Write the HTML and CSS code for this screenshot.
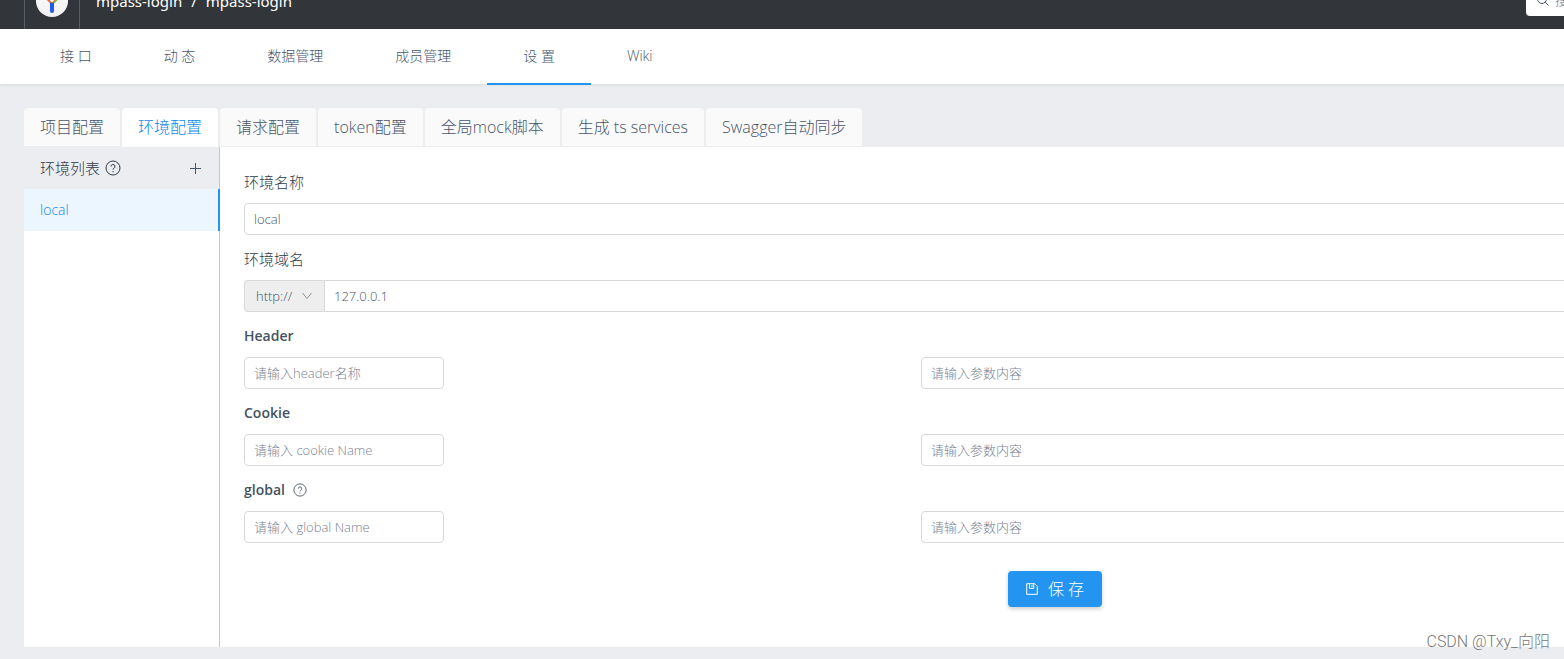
FILE: index.html
```html
<!DOCTYPE html>
<html lang="zh-CN">
<head>
<meta charset="utf-8">
<title>mpass-login</title>
<link rel="stylesheet" href="styles.css">
</head>
<body>
<div class="app">
  <header class="topbar">
    <div class="topbar-inner">
      <a class="logo" href="#" aria-label="首页">
        <svg viewBox="0 0 32 32" width="32" height="32">
          <defs><linearGradient id="disc" x1="0" y1="0" x2="0" y2="1"><stop offset="0" stop-color="#fff"/><stop offset="1" stop-color="#f0f0f0"/></linearGradient></defs>
          <circle cx="16" cy="16" r="16" fill="url(#disc)"/>
          <path d="M9 10l6.500 7" stroke="#fa5a28" stroke-width="4" stroke-linecap="round"/>
          <path d="M23 10l-5 6" stroke="#57cf27" stroke-width="4" stroke-linecap="round"/>
          <path d="M16 18v8" stroke="#2359f1" stroke-width="4" stroke-linecap="round"/>
          <circle cx="16" cy="15" r="2.500" fill="#fff" stroke="#fa5a28"/>
        </svg>
      </a>
      <nav class="crumbs"><a href="#">mpass-login</a><span>/</span><a href="#">mpass-login</a></nav>
    </div>
  </header>

  <nav class="subnav">
    <a href="#">接 口</a>
    <a href="#">动 态</a>
    <a href="#">数据管理</a>
    <a href="#">成员管理</a>
    <a href="#" class="current">设 置</a>
    <a href="#">Wiki</a>
  </nav>

  <main class="content">
    <div class="tabs" role="tablist">
      <button type="button" role="tab">项目配置</button>
      <button type="button" role="tab" aria-selected="true" class="active">环境配置</button>
      <button type="button" role="tab">请求配置</button>
      <button type="button" role="tab">token配置</button>
      <button type="button" role="tab">全局mock脚本</button>
      <button type="button" role="tab">生成 ts services</button>
      <button type="button" role="tab">Swagger自动同步</button>
    </div>

    <div class="panel">
      <aside class="envs">
        <div class="envs-head">
          <span class="envs-title">环境列表
            <svg class="help" viewBox="0 0 16 16" width="16" height="16"><circle cx="8" cy="8" r="7"/><path d="M6 6.500a2 2 0 1 1 2.800 1.800c-.6.300-.8.600-.8 1.300M8 11v1.200"/></svg>
          </span>
          <button type="button" class="add" aria-label="添加环境"><svg viewBox="0 0 13 13" width="13" height="13"><path d="M6.500 1v11M1 6.500h11"/></svg></button>
        </div>
        <a href="#" class="env">local</a>
      </aside>

      <form class="form">
        <label class="title" for="name">环境名称</label>
        <input id="name" class="field" type="text" value="local">

        <label class="title" for="domain">环境域名</label>
        <div class="domain">
          <div class="protocol">
            <select aria-label="协议"><option>http://</option><option>https://</option></select>
            <svg viewBox="0 0 10 8" width="10" height="8"><path d="M0.500 1l4.500 5.500L9.500 1"/></svg>
          </div>
          <input id="domain" class="field" type="text" value="127.0.0.1">
        </div>

        <label class="title latin" for="header">Header</label>
        <div class="pair">
          <input id="header" class="field key" type="text" placeholder="请输入header名称">
          <input class="field" type="text" placeholder="请输入参数内容" aria-label="Header 内容">
        </div>

        <label class="title latin" for="cookie">Cookie</label>
        <div class="pair">
          <input id="cookie" class="field key" type="text" placeholder="请输入 cookie Name">
          <input class="field" type="text" placeholder="请输入参数内容" aria-label="Cookie 内容">
        </div>

        <label class="title latin" for="global">global
          <svg class="help small" viewBox="0 0 16 16" width="14" height="14"><circle cx="8" cy="8" r="7"/><path d="M6 6.500a2 2 0 1 1 2.800 1.800c-.6.300-.8.600-.8 1.300M8 11v1.200"/></svg>
        </label>
        <div class="pair">
          <input id="global" class="field key" type="text" placeholder="请输入 global Name">
          <input class="field" type="text" placeholder="请输入参数内容" aria-label="global 内容">
        </div>

        <button type="submit" class="save">
          <svg viewBox="0 0 12 12" width="12" height="12"><path d="M0.700 0.700h8l2.600 2.600v8H0.700zM3.500 1v4.300h4.200V1M6 2v1.800"/></svg>
          保 存
        </button>
      </form>
    </div>
  </main>
</div>

<label class="search">
  <svg viewBox="0 0 12 12" width="12" height="12"><circle cx="5" cy="5" r="4.500"/><path d="M8.200 8.200l3.300 3.300"/></svg>
  <input type="search" placeholder="搜索分组/项目/接口" aria-label="搜索">
</label>
<div class="watermark">CSDN @Txy_向阳</div>
</body>
</html>
```
FILE: styles.css
```css
* { box-sizing: border-box; }

body {
  position: relative;
  margin: 0;
  min-height: 100vh;
  overflow: hidden;
  background: #ecedf1;
  color: #47556a;
  font: 300 14px/20px "Open Sans", "Noto Sans CJK SC", sans-serif;
}

a { color: inherit; text-decoration: none; }
button, input, select { font: inherit; color: inherit; margin: 0; }
svg { fill: none; stroke: currentColor; flex: none; }

/* The workspace is wider than the window and runs off its right side. */
.app { width: calc(100% + 350px); }

.topbar {
  display: flex;
  align-items: flex-end;
  height: 29px;
  overflow: hidden;
  background: #32363a;
}
.topbar-inner { display: flex; align-items: center; height: 56px; padding-left: 24px; }
.logo {
  display: flex;
  align-items: center;
  justify-content: center;
  width: 56px;
  height: 56px;
  border: solid #575d66;
  border-width: 0 1px;
}
.logo svg { stroke: none; }
.crumbs { display: flex; gap: 9px; padding-left: 16px; color: #fff; font: 400 15px/20px "Noto Sans", sans-serif; }

.subnav {
  display: flex;
  height: 55px;
  padding-left: 24px;
  background: #fff;
  box-shadow: 0 1px 3px rgba(0, 0, 0, .08);
}
.subnav a { height: 56px; padding: 17px 36px; border-bottom: 2px solid transparent; }
.subnav a.current { border-color: #2395f1; }

.content { padding: 24px 24px 12px; }

.tabs { display: flex; gap: 2px; }
.tabs button {
  height: 38px;
  padding: 0 16px;
  border: 0;
  border-radius: 4px 4px 0 0;
  background: #fafafa;
  font-size: 16px;
}
.tabs .active { height: 39px; padding-bottom: 1px; background: #fff; color: #1088e9; }

.panel { display: flex; min-height: 500px; background: #fff; }
.envs { width: 196px; border-right: 1px solid #c8c8c8; }
.envs-head {
  display: flex;
  align-items: center;
  justify-content: space-between;
  height: 42px;
  padding: 0 17px 0 16px;
  background: #ecedf1;
}
.envs-title { display: flex; align-items: center; gap: 5px; color: #2c3a48; font-size: 15px; }
.add { display: flex; padding: 0; border: 0; background: none; }
.env {
  display: block;
  margin-right: -1px;
  padding: 11px 16px;
  border-right: 2px solid #2395f1;
  background: #ecf6fe;
  color: #1088e9;
}

.form { flex: 1; display: flex; flex-direction: column; padding: 24px; }
.title {
  display: flex;
  align-items: center;
  gap: 8px;
  margin-bottom: 10px;
  color: #2c3a48;
  font-size: 15px;
  line-height: 22px;
}
.title.latin { color: #455260; font-size: 14px; font-weight: 600; }
.field {
  width: 100%;
  height: 32px;
  margin-bottom: 13px;
  padding: 0 9px;
  border: 1px solid #d9d9d9;
  border-radius: 4px;
  background: #fff;
  font-size: 13px;
}
.field::placeholder { color: #788294; opacity: 1; }

.domain { display: flex; }
.domain .field { border-radius: 0 4px 4px 0; }
.protocol { position: relative; flex: none; width: 80px; height: 32px; }
.protocol select {
  appearance: none;
  width: 100%;
  height: 32px;
  padding: 0 11px;
  border: 1px solid #d9d9d9;
  border-right: 0;
  border-radius: 4px 0 0 4px;
  background: #eee;
  font-size: 13px;
}
.protocol svg { position: absolute; right: 12px; top: 12px; color: #8a93a3; pointer-events: none; }

.pair { display: grid; grid-template-columns: 5fr 7fr; column-gap: 2px; }
.pair .key { width: 200px; }

.save {
  display: flex;
  align-items: center;
  align-self: center;
  gap: 10px;
  height: 36px;
  margin-top: 15px;
  padding: 0 18px;
  border: 0;
  border-radius: 4px;
  background: #2395f1;
  box-shadow: 0 2px 4px rgba(0, 0, 0, .2);
  color: #fff;
  font-size: 16px;
}

.search {
  position: absolute;
  top: -16px;
  right: -162px;
  display: flex;
  align-items: center;
  gap: 6px;
  width: 200px;
  height: 32px;
  padding-left: 11px;
  border-radius: 4px;
  background: #fff;
}
.search input { width: 150px; padding: 0; border: 0; background: none; font-size: 13px; }

.watermark {
  position: absolute;
  right: 14px;
  bottom: 7px;
  color: #777;
  font: 300 16px/20px Roboto, "Noto Sans CJK SC", sans-serif;
}
```
